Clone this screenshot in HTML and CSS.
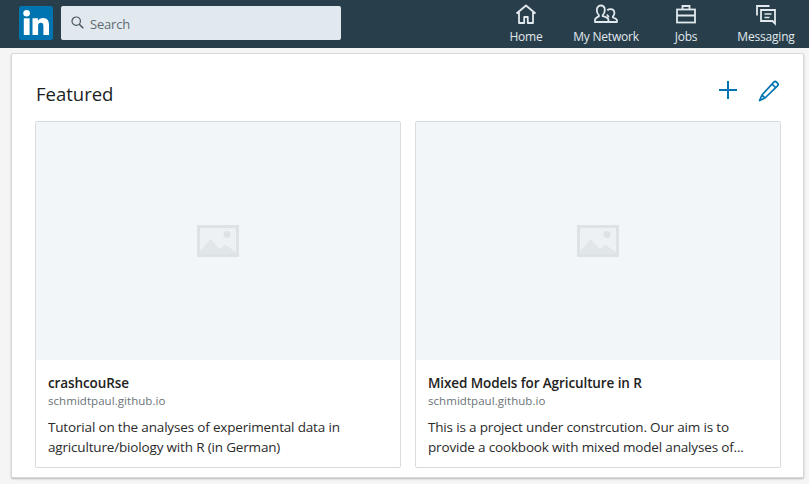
FILE: index.html
```html
<!DOCTYPE html>
<html lang="en">
<head>
<meta charset="utf-8">
<title>Featured</title>
<link rel="stylesheet" href="styles.css">
</head>
<body>
<header class="topbar">
  <div class="logo"><svg width="34" height="34" viewBox="0 0 34 34"><rect width="34" height="34" rx="2.500" fill="#0073b1"/><circle cx="7.600" cy="7.300" r="3.300" fill="#fff"/><rect x="4.800" y="12.300" width="5.800" height="16.700" fill="#fff"/><path d="M13.500 12.300h5.400v2.400c.9-1.600 2.800-2.800 5.200-2.800 4.500 0 5.900 2.900 5.900 7.100V29h-5.600v-8.500c0-2-.4-3.700-2.500-3.700-2.300 0-2.800 1.700-2.800 3.600V29h-5.600z" fill="#fff"/></svg></div>
  <div class="search">
    <svg class="search-icon" width="13" height="13" viewBox="0 0 13 13"><circle cx="5.200" cy="5.200" r="4.200" fill="none" stroke="#46535b" stroke-width="1.200"/><path d="M8.300 8.300l4 4" stroke="#46535b" stroke-width="1.500" fill="none"/></svg>
    <span class="search-text">Search</span>
  </div>
  <nav class="nav">
    <a class="nav-item">
      <svg width="24" height="24" viewBox="0 0 24 24" fill="none" stroke="#e1e9ee" stroke-width="1.800" stroke-linejoin="round"><path d="M2.500 11.500L12 3.500l9.500 8M5 10v11h5.200v-6h3.600v6H19V10"/></svg>
      <span>Home</span>
    </a>
    <a class="nav-item">
      <svg width="24" height="24" viewBox="0 0 24 24" fill="none" stroke="#e1e9ee" stroke-width="1.800" stroke-linejoin="round"><path d="M6.800 3.500c2.500 0 4 2 4 4.600 0 2.200-1 4.100-2.100 5v1.100c2.900.7 5.100 1.700 5.700 3.200V20H1v-2.600c.6-1.500 2.800-2.500 3.900-3.200v-1.100c-1.100-.9-2.100-2.800-2.100-5 0-2.600 1.500-4.600 4-4.600z"/><path d="M13.300 8.200c.8-.7 2-1.100 3.300-1.100 2.400 0 3.800 1.700 3.800 3.800 0 1.500-.7 2.900-1.500 3.600v1c1.800.5 3.500 1.200 4 2.400V20h-8.800"/><path d="M14.400 15.500v-1c-.6-.6-1-1.200-1.300-2"/></svg>
      <span>My Network</span>
    </a>
    <a class="nav-item">
      <svg width="24" height="24" viewBox="0 0 24 24" fill="none" stroke="#e1e9ee" stroke-width="1.800"><rect x="3" y="7.500" width="18" height="13"/><path d="M3 13.500h18M8.500 7.500V4h7v3.500"/></svg>
      <span>Jobs</span>
    </a>
    <a class="nav-item">
      <svg width="24" height="24" viewBox="0 0 24 24" fill="none" stroke="#e1e9ee" stroke-width="1.800"><path d="M15.500 4H3v9.500"/><path d="M7 8h14v13.500l-2.500-2.500H7z"/><path d="M10.500 12h7M10.500 15.500h5" stroke-width="1.400"/></svg>
      <span>Messaging</span>
    </a>
  </nav>
</header>
<main class="panel">
  <div class="panel-head">
    <h2 class="panel-title">Featured</h2>
    <div class="panel-actions">
      <svg width="24" height="24" viewBox="0 0 24 24" fill="none" stroke="#0073b1" stroke-width="2"><path d="M12 3v18M3 12h18"/></svg>
      <svg width="24" height="24" viewBox="0 0 24 24" fill="none" stroke="#0073b1" stroke-width="1.700" stroke-linejoin="round"><path d="M5 17L16.800 4.200a2 2 0 0 1 2.800 0l.9.900a2 2 0 0 1 0 2.800L8 20l-5.500 2.500zM15 6l3.800 3.800M5 17l3 3"/></svg>
    </div>
  </div>
  <div class="grid">
    <article class="card">
      <div class="thumb"><svg width="42" height="32" viewBox="0 0 42 32"><rect x="1.500" y="1.500" width="39" height="29" fill="#eef1f3" stroke="#dce2e5" stroke-width="3"/><path d="M3 26l10.500-12 9.500 10 5-4.500L39 27v2H3z" fill="#e1e6e9"/><circle cx="30" cy="9.500" r="3.500" fill="#dce2e5"/></svg></div>
      <div class="body">
        <h3 class="title">crashcouRse</h3>
        <p class="source">schmidtpaul.github.io</p>
        <p class="desc">Tutorial on the analyses of experimental data in agriculture/biology with R (in German)</p>
      </div>
    </article>
    <article class="card">
      <div class="thumb"><svg width="42" height="32" viewBox="0 0 42 32"><rect x="1.500" y="1.500" width="39" height="29" fill="#eef1f3" stroke="#dce2e5" stroke-width="3"/><path d="M3 26l10.500-12 9.500 10 5-4.500L39 27v2H3z" fill="#e1e6e9"/><circle cx="30" cy="9.500" r="3.500" fill="#dce2e5"/></svg></div>
      <div class="body">
        <h3 class="title">Mixed Models for Agriculture in R</h3>
        <p class="source">schmidtpaul.github.io</p>
        <p class="desc">This is a project under constrcution. Our aim is to provide a cookbook with mixed model analyses of...</p>
      </div>
    </article>
  </div>
</main>
</body>
</html>
```
FILE: styles.css
```css
* { box-sizing: border-box; }
html, body { margin: 0; padding: 0; }
body {
  width: 809px;
  height: 484px;
  overflow: hidden;
  background: #f5f5f5;
  font-family: "Open Sans", "Noto Sans", sans-serif;
  color: #1f1f1f;
}
.topbar {
  height: 48px;
  background: #283e4a;
  display: flex;
  align-items: flex-start;
  padding: 6px 3px 0 19px;
}
.logo { width: 34px; height: 34px; margin-right: 8px; }
.logo svg { display: block; }
.search {
  width: 280px;
  height: 34px;
  background: #e1e9ee;
  border-radius: 2px;
  display: flex;
  align-items: center;
  padding: 1px 0 0 10px;
}
.search-icon { margin: -2px 6px 0 0; }
.search-text { font-size: 13px; color: #5f6b72; letter-spacing: -0.2px; }
.nav { display: flex; margin-left: auto; margin-top: -6px; }
.nav-item {
  width: 80px;
  height: 48px;
  display: flex;
  flex-direction: column;
  align-items: center;
  padding-top: 2px;
  color: #e1e9ee;
  font-size: 12px;
  letter-spacing: -0.2px;
  line-height: 16px;
}
.nav-item svg { display: block; margin-bottom: 3px; }
.panel {
  width: 793px;
  height: 425px;
  margin: 5px 0 0 11px;
  background: #fff;
  border-radius: 2px;
  border: 1px solid #d9d9d9;
  box-shadow: 0 1px 2px rgba(0, 0, 0, 0.25);
  padding: 0 22px 0 23px;
}
.panel-head {
  height: 67px;
  display: flex;
  justify-content: space-between;
  align-items: flex-start;
}
.panel-title {
  margin: 25px 0 0 1px;
  font-size: 18.500px;
  font-weight: 400;
  line-height: 30px;
  color: #1c1f22;
}
.panel-actions { display: flex; gap: 17px; margin: 24px 0 0 0; }
.grid { display: grid; grid-template-columns: 366px 366px; gap: 14px; }
.card {
  height: 347px;
  border: 1px solid #d9dcde;
  border-radius: 2px;
  overflow: hidden;
  background: #fff;
}
.thumb {
  height: 238px;
  background: #f3f6f8;
  display: flex;
  align-items: center;
  justify-content: center;
}
.body { padding: 14px 12px 0; }
.title {
  margin: 0;
  font-size: 13.500px;
  font-weight: 600;
  line-height: 18px;
  letter-spacing: -0.1px;
  color: #222;
}
.source {
  margin: 0;
  font-size: 11.500px;
  line-height: 17px;
  color: #6b7378;
  letter-spacing: 0.05px;
}
.desc {
  margin: 8px 0 0;
  font-size: 13.500px;
  line-height: 20px;
  letter-spacing: -0.17px;
  color: #2b2b2b;
}
```
